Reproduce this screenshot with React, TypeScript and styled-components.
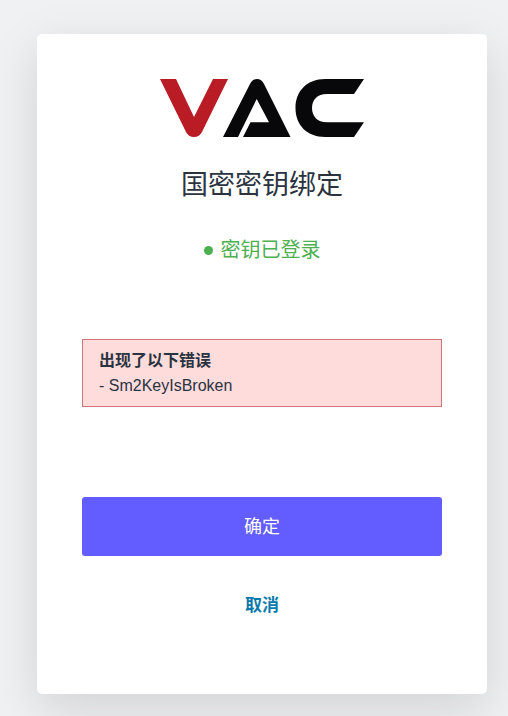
import React from "react";
import styled, { createGlobalStyle } from "styled-components";

const GlobalStyle = createGlobalStyle`
  *, *::before, *::after { box-sizing: border-box; }
  body {
    margin: 0;
    background: #f0f1f3;
    color: #2b333f;
    font-family: "Liberation Sans", "Noto Sans CJK SC", sans-serif;
    font-size: 16px;
    line-height: 25px;
  }
`;

const Page = styled.main`
  display: flex;
  justify-content: center;
  min-height: 100vh;
  padding: 34px 21px 22px 37px;
`;

const Card = styled.form`
  display: flex;
  flex-direction: column;
  align-items: stretch;
  width: 100%;
  max-width: 450px;
  padding: 45px 45px 76px;
  border-radius: 5px;
  background: #fff;
  box-shadow: 0 15px 50px rgba(0, 0, 0, 0.13);
`;

const Logo = styled.svg`
  display: block;
  align-self: center;
  width: 204px;
  height: 58px;
`;

const Title = styled.h1`
  margin: 28px 0 0;
  font-size: 27px;
  font-weight: 400;
  line-height: 40px;
  text-align: center;
`;

const Status = styled.p`
  display: flex;
  align-items: center;
  justify-content: center;
  gap: 8px;
  margin: 30px 0 0;
  color: #4caf50;
  font-size: 20px;
  font-weight: 400;
  line-height: 30px;
`;

const Dot = styled.span`
  width: 9px;
  height: 9px;
  border-radius: 50%;
  background: currentColor;
`;

const ErrorBox = styled.section`
  margin-top: 74px;
  padding: 8px 16px;
  border: 1px solid #cf7477;
  background: #ffdcdc;
`;

const ErrorTitle = styled.h2`
  margin: 0;
  font-size: 16px;
  font-weight: 700;
  line-height: 25px;
`;

const ErrorText = styled.p`
  margin: 0;
`;

const ConfirmButton = styled.button`
  margin-top: 90px;
  padding: 17px 16px 15px;
  border: 0;
  border-radius: 3px;
  background: #635dff;
  color: #fff;
  font: inherit;
  font-size: 18px;
  font-weight: 400;
  line-height: 27px;
  cursor: pointer;
`;

const CancelLink = styled.a`
  align-self: center;
  margin-top: 37px;
  color: #0a7aad;
  font-size: 17px;
  font-weight: 700;
  line-height: 25px;
  text-decoration: none;
`;

export default function App() {
  return (
    <>
      <GlobalStyle />
      <Page>
        <Card onSubmit={(event) => event.preventDefault()}>
          <Logo viewBox="0 0 204 58" role="img" aria-label="VAC">
            <path
              fill="#b91c24"
              d="M0 0H16L34 38L53 0H68L42 53Q39.500 58 34 58Q28.500 58 26 53Z"
            />
            <g fill="#08080a">
              <path d="M63 58L90 5Q92.500 0 97 0Q101.500 0 104 5L130.500 58H83L90.500 43.300H109L96.700 20L78 58Z" />
              <path d="M204 0H165C147 0 135.500 12 135.500 29S147 58 165 58H194L204 43.300H167C157 43.300 152 37 152 29S157 15 167 15H194Z" />
            </g>
          </Logo>
          <Title>国密密钥绑定</Title>
          <Status>
            <Dot aria-hidden="true" />
            密钥已登录
          </Status>
          <ErrorBox role="alert">
            <ErrorTitle>出现了以下错误</ErrorTitle>
            <ErrorText>- Sm2KeyIsBroken</ErrorText>
          </ErrorBox>
          <ConfirmButton type="submit">确定</ConfirmButton>
          <CancelLink href="#cancel">取消</CancelLink>
        </Card>
      </Page>
    </>
  );
}
